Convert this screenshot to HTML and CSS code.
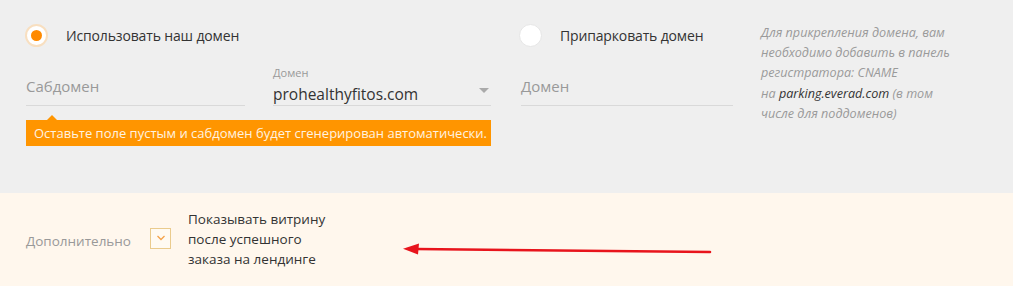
FILE: index.html
```html
<!DOCTYPE html>
<html lang="ru">
<head>
<meta charset="utf-8">
<link rel="stylesheet" href="styles.css">
</head>
<body>
<div class="page">
  <section class="domain">
    <div class="col col-our">
      <label class="radio-row">
        <span class="radio checked"><span class="dot"></span></span>
        <span class="radio-label">Использовать наш домен</span>
      </label>
      <div class="fields">
        <div class="field field-sub">
          <span class="placeholder">Сабдомен</span>
        </div>
        <div class="field field-select">
          <span class="small-label">Домен</span>
          <span class="value">prohealthyfitos.com</span>
          <span class="caret"></span>
        </div>
      </div>
      <div class="tooltip">Оставьте поле пустым и сабдомен будет сгенерирован автоматически.</div>
    </div>
    <div class="col col-park">
      <label class="radio-row">
        <span class="radio"></span>
        <span class="radio-label">Припарковать домен</span>
      </label>
      <div class="fields">
        <div class="field field-park">
          <span class="placeholder">Домен</span>
        </div>
      </div>
    </div>
    <p class="help">Для прикрепления домена, вам необходимо добавить в панель регистратора: CNAME<br>на <span class="host">parking.everad.com</span> (в том<br>числе для поддоменов)</p>
  </section>
  <section class="extra">
    <span class="extra-label">Дополнительно</span>
    <span class="checkbox">
      <svg width="10" height="6" viewBox="0 0 10 6"><path d="M1.5 1 L5 4.5 L8.5 1" fill="none" stroke="#f5a24a" stroke-width="1.3"/></svg>
    </span>
    <span class="check-label">Показывать витрину<br>после успешного<br>заказа на лендинге</span>
    <svg class="annot-arrow" width="320" height="20" viewBox="0 0 320 20">
      <path d="M14 9 L308 12" stroke="#e8141c" stroke-width="2.6" stroke-linecap="round" fill="none"/>
      <path d="M1 8.7 L17 3.5 L16 14.5 Z" fill="#e8141c"/>
    </svg>
  </section>
</div>
</body>
</html>
```
FILE: styles.css
```css
* { box-sizing: border-box; }
html, body { margin: 0; padding: 0; background: #ffffff; }
body {
  font-family: "Open Sans", "Liberation Sans", Arial, sans-serif;
  color: #333333;
  width: 1024px;
  height: 286px;
  overflow: hidden;
}
.page { width: 1013px; }

.domain {
  background: #efefef;
  height: 193px;
  padding: 24px 0 0 25px;
  display: flex;
  align-items: flex-start;
}
.col-our { width: 466px; }
.col-park { width: 214px; margin-left: 28px; }

.radio-row {
  display: flex;
  align-items: center;
  height: 23px;
}
.radio {
  width: 23px;
  height: 23px;
  border-radius: 50%;
  background: #ffffff;
  border: 1px solid #e6e6e6;
  display: flex;
  align-items: center;
  justify-content: center;
  flex: none;
}
.radio.checked { border: 2px solid #f8dfc0; }
.dot {
  width: 11px;
  height: 11px;
  border-radius: 50%;
  background: #ff8a00;
}
.radio-label {
  margin-left: 18px;
  font-size: 14px;
  color: #333;
  letter-spacing: -0.15px;
}

.fields {
  display: flex;
  gap: 28px;
  margin-top: 25px;
  padding-left: 1px;
}
.col-park .fields { padding-left: 2px; }
.field {
  height: 34px;
  border-bottom: 1px solid #d9d9d9;
  position: relative;
}
.field-sub { width: 219px; }
.field-select { width: 218px; }
.field-park { width: 218px; }
.placeholder {
  display: block;
  font-size: 15px;
  color: #999999;
  padding-top: 4px;
}
.small-label {
  display: block;
  font-size: 11px;
  color: #999;
  line-height: 12px;
  margin-top: -5px;
}
.value {
  display: block;
  font-size: 15.5px;
  color: #333;
  line-height: 22px;
  margin-top: 4px;
}
.caret {
  position: absolute;
  right: 2px;
  top: 16px;
  width: 0;
  height: 0;
  border-left: 5px solid transparent;
  border-right: 5px solid transparent;
  border-top: 5px solid #aaaaaa;
}

.tooltip {
  position: relative;
  margin-top: 14px;
  margin-left: 1px;
  width: 465px;
  height: 26px;
  background: #ff9500;
  color: #fff3e0;
  font-size: 13px;
  line-height: 26px;
  padding-left: 8px;
}
.tooltip::before {
  content: "";
  position: absolute;
  left: 21px;
  top: -5px;
  border-left: 5px solid transparent;
  border-right: 5px solid transparent;
  border-bottom: 5px solid #ff9500;
}

.help {
  margin: -1px 0 0 28px;
  width: 200px;
  font-size: 12.6px;
  line-height: 20.2px;
  font-style: italic;
  color: #9a9a9a;
}
.host { color: #333; }

.extra {
  position: relative;
  background: #fff7ed;
  height: 93px;
  display: flex;
  align-items: center;
  padding-left: 26px;
}
.extra-label {
  font-size: 13.5px;
  color: #999;
  width: 124px;
  margin-top: 2px;
}
.checkbox {
  width: 21px;
  height: 21px;
  border: 1px solid #eacb8d;
  background: #fffaf2;
  display: flex;
  align-items: center;
  justify-content: center;
  flex: none;
  margin-top: -3px;
}
.check-label {
  margin-left: 17px;
  font-size: 13.5px;
  line-height: 20px;
  color: #333;
  margin-top: -2px;
}
.annot-arrow {
  position: absolute;
  left: 402px;
  top: 47px;
}
```
